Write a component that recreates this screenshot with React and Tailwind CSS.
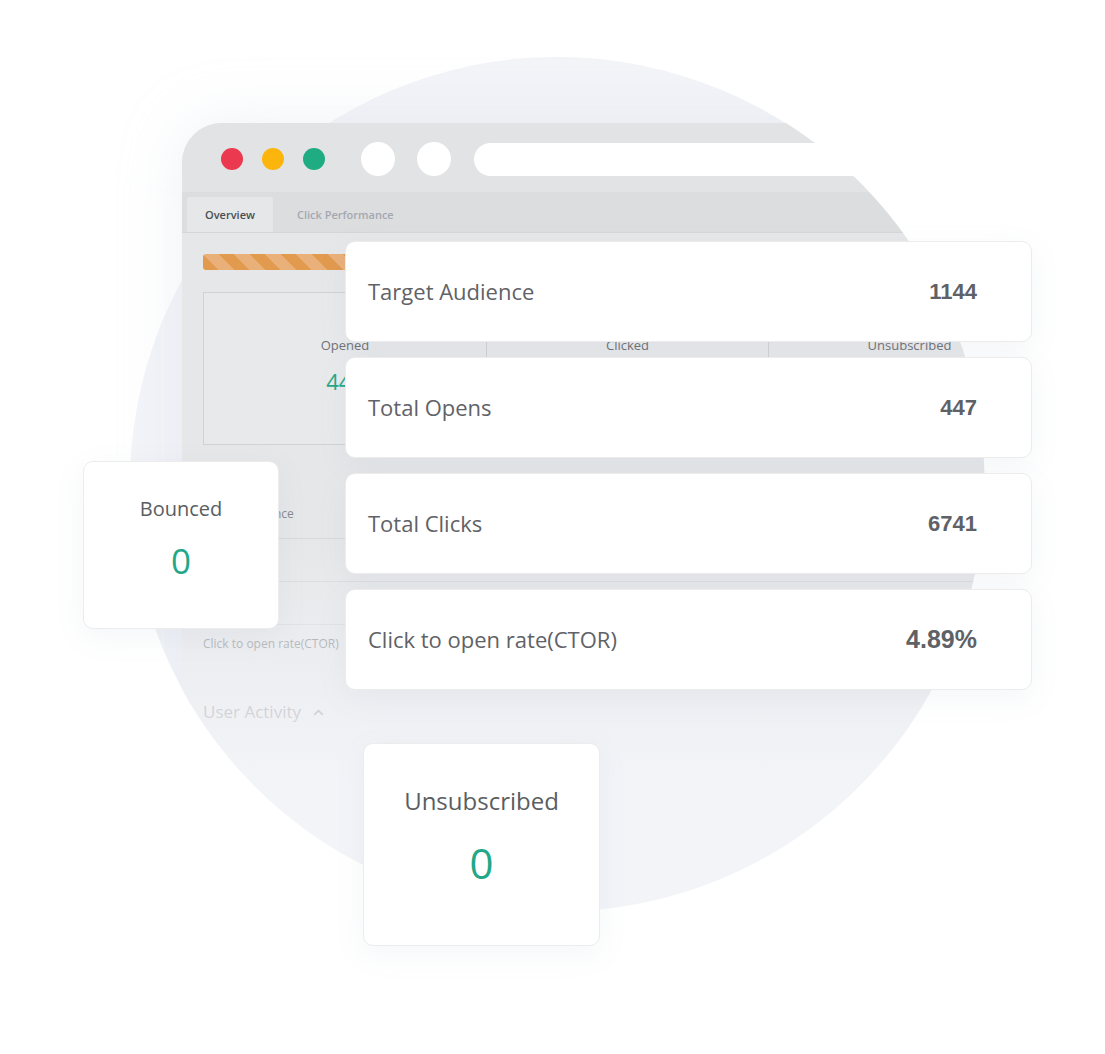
import { ChevronUp } from "lucide-react";

const summary = [
  { label: "Target Audience", value: "1144" },
  { label: "Total Opens", value: "447" },
  { label: "Total Clicks", value: "6741" },
  { label: "Click to open rate(CTOR)", value: "4.89%", big: true },
];

const overview = [
  { label: "Opened", value: "447" },
  { label: "Clicked", value: "6741" },
  { label: "Unsubscribed", value: "0" },
];


function BrowserWindow() {
  return (
    <div className="absolute left-[182px] top-[123px] h-[820px] w-[890px] overflow-hidden rounded-t-[40px] bg-[#e6e7e9] shadow-[0_0_60px_rgba(205,215,230,0.35)]">
      <div className="flex h-[69px] items-center bg-[#e2e3e4] pl-[39px] pt-[3px]">
        <span className="h-[22px] w-[22px] rounded-full bg-[#eb3a4f]" />
        <span className="ml-[19px] h-[22px] w-[22px] rounded-full bg-[#fbb50d]" />
        <span className="ml-[19px] h-[22px] w-[22px] rounded-full bg-[#1fac83]" />
        <span className="ml-[36px] h-[34px] w-[34px] rounded-full bg-white" />
        <span className="ml-[22px] h-[34px] w-[34px] rounded-full bg-white" />
        <span className="ml-[23px] h-[33px] flex-1 rounded-full bg-white" />
      </div>

      <div className="flex h-[41px] items-end border-b border-[#d4d6d8] bg-[#dcdddf]">
        <div className="ml-[5px] flex h-[35px] w-[86px] items-center justify-center rounded-t-[3px] bg-[#e6e7e8] pt-[2px] text-[11px] font-semibold text-[#4b4d50]">
          Overview
        </div>
        <div className="ml-[24px] flex h-[35px] items-center pt-[2px] text-[11px] font-semibold text-[#a3a8b0]">
          Click Performance
        </div>
      </div>

      <div className="px-[21px] pt-[21px]">
        <div className="h-[16px] w-[640px] rounded-[3px] bg-[repeating-linear-gradient(45deg,#e29a4e_0px,#e29a4e_11px,#eab07a_11px,#eab07a_22px)]" />

        <div className="mt-[22px] h-[153px] border border-[#d0d2d4] bg-[#e8e9eb]">
          <div className="mt-[36px] grid h-[95px] grid-cols-3">
            {overview.map((item, index) => (
              <div
                className={index === 0 ? "flex flex-col items-center pt-[7px]" : "flex flex-col items-center border-l border-[#d0d2d4] pt-[7px]"}
                key={item.label}
              >
                <p className="text-[13px] leading-[18px] text-[#6f7276]">{item.label}</p>
                <p className="mt-[12px] text-[22px] leading-[30px] text-[#22a888]">{item.value}</p>
              </div>
            ))}
          </div>
        </div>

        <div className="mt-[51px]">
          {summary.map((item, index) => (
            <div
              className={
                index === summary.length - 1
                  ? "flex h-[43px] items-center pb-[6px] text-[12px] text-[#888b8f]"
                  : "flex h-[43px] items-center border-b border-[#d6d8db] pb-[6px] text-[12px] text-[#888b8f]"
              }
              key={item.label}
            >
              {item.label}
            </div>
          ))}
        </div>

        <div className="mt-[32px] flex items-center gap-[10px] text-[17px] leading-[24px] text-[#777a7e]">
          User Activity
          <ChevronUp size={15} strokeWidth={3} />
        </div>
      </div>
    </div>
  );
}


function SummaryCard({ item }) {
  return (
    <div className="flex h-[101px] items-center justify-between rounded-[10px] border border-[#ececec] bg-white pl-[22px] pr-[54px] shadow-[0_8px_30px_rgba(120,140,170,0.08)]">
      <span className="text-[22px] text-[#5f6266]">{item.label}</span>
      <span
        className={
          item.big
            ? "font-['Liberation_Sans',Arial,sans-serif] text-[25px] font-bold text-[#5e6166]"
            : "font-['Liberation_Sans',Arial,sans-serif] text-[22px] font-bold text-[#5e6166]"
        }
      >
        {item.value}
      </span>
    </div>
  );
}


export default function App() {
  return (
    <div className="relative h-[1054px] w-[1105px] overflow-hidden bg-white font-['Open_Sans',sans-serif]">
      <div className="absolute left-[130px] top-[57px] h-[854px] w-[854px] rounded-full bg-[#f3f4f8]" />

      <BrowserWindow />

      {/* fade the lower part of the window into the circle */}
      <div className="absolute left-[182px] top-[537px] h-[517px] w-[890px] bg-[linear-gradient(to_bottom,rgba(243,244,248,0)_0px,#f3f4f8_240px)]" />

      {/* clip the window to the circle on the right and bottom */}
      <div className="absolute left-[557px] top-0 h-[1054px] w-[548px] bg-[radial-gradient(circle_at_0px_484px,transparent_427px,#ffffff_428px)]" />
      <div className="absolute left-0 top-[484px] h-[570px] w-[557px] bg-[radial-gradient(circle_at_557px_0px,transparent_427px,#ffffff_428px)]" />

      <div className="absolute left-[345px] top-[241px] flex w-[687px] flex-col gap-[15px]">
        {summary.map((item) => (
          <SummaryCard item={item} key={item.label} />
        ))}
      </div>

      <div className="absolute left-[83px] top-[461px] flex h-[168px] w-[196px] flex-col items-center rounded-[10px] border border-[#ececec] bg-white pt-[33px] shadow-[0_8px_30px_rgba(120,140,170,0.08)]">
        <p className="text-[20px] leading-[28px] text-[#5a5d61]">Bounced</p>
        <p className="mt-[16px] text-[35px] leading-[44px] text-[#22a888]">0</p>
      </div>

      <div className="absolute left-[363px] top-[743px] flex h-[203px] w-[237px] flex-col items-center rounded-[10px] border border-[#ececec] bg-white pt-[41px] shadow-[0_8px_30px_rgba(120,140,170,0.08)]">
        <p className="text-[24px] leading-[32px] text-[#5a5d61]">Unsubscribed</p>
        <p className="mt-[20px] text-[42px] leading-[52px] text-[#22a888]">0</p>
      </div>
    </div>
  );
}
